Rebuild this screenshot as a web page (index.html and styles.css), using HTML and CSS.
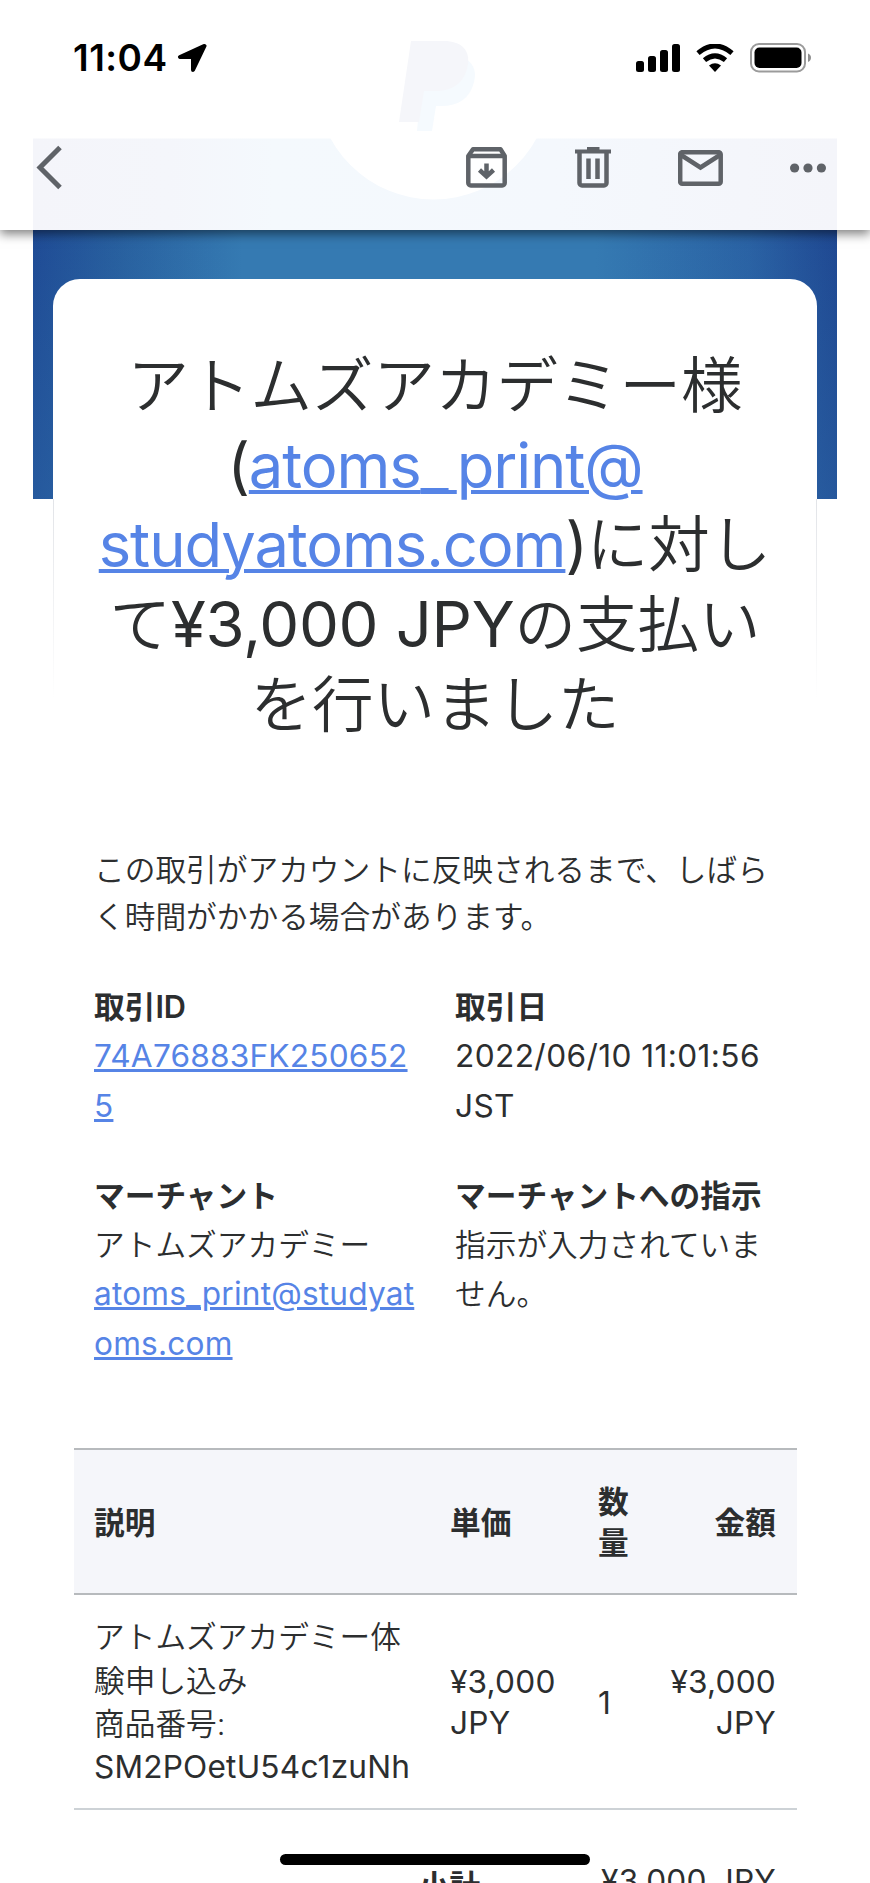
FILE: index.html
```html
<!DOCTYPE html>
<html lang="ja">
<head>
    <meta charset="UTF-8">
    <meta name="viewport" content="width=device-width, initial-scale=1.0">
    <title>支払いを行いました</title>
    <link rel="stylesheet" href="styles.css">
</head>
<body>
<div class="screen">
    <header class="topbar">
        <svg class="ghost" width="870" height="230" viewBox="0 0 870 230">
            <defs>
                <linearGradient id="pale" x1="0" x2="1" y1="0" y2="0">
                    <stop offset="0" stop-color="#f4f5fa"/>
                    <stop offset="0.17" stop-color="#f4f6fb"/>
                    <stop offset="0.3" stop-color="#f4f9fd"/>
                    <stop offset="0.65" stop-color="#f4f8fd"/>
                    <stop offset="1" stop-color="#f4f5fa"/>
                </linearGradient>
            </defs>
            <rect x="33" y="138.5" width="804" height="92" fill="url(#pale)"/>
            <circle cx="433.500" cy="82" r="117.5" fill="#fff"/>
            <path d="M424 57h38c11 5 15 13 12 25-4 16-15 24-33 24h-5l-4 25h-15z" fill="#f5fafe"/>
            <path d="M411 41h33c17 0 26 9 24 23-3 18-14 27-32 27h-12l-5 31h-20z" fill="#f5f6fa"/>
        </svg>
        <div class="status">
            <span class="time">11:04</span>
            <svg class="arrow" width="30" height="30" viewBox="0 0 30 30"><path d="M27 3L3 14H16V27L27.500 3z" fill="#000" stroke="#000" stroke-width="4" stroke-linejoin="round"/></svg>
            <div class="status-icons">
                <svg width="44" height="28" viewBox="0 0 44 28">
                    <rect x="0" y="17" width="8" height="11" rx="2.500"/>
                    <rect x="12" y="12" width="8" height="16" rx="2.500"/>
                    <rect x="24" y="6" width="8" height="22" rx="2.500"/>
                    <rect x="36" y="0" width="8" height="28" rx="2.500"/>
                </svg>
                <svg width="38" height="28" viewBox="0 0 38 28">
                    <path d="M2 9.200Q19 -5.200 36 9.200" fill="none" stroke="#000" stroke-width="5"/>
                    <path d="M8.500 16.200Q19 7.400 29.500 16.200" fill="none" stroke="#000" stroke-width="5"/>
                    <path d="M13 21.500Q19 17 25 21.500L19 28z"/>
                </svg>
                <svg width="62" height="30" viewBox="0 0 62 30">
                    <rect x="1" y="1" width="54" height="27.500" rx="8" fill="none" stroke="#9b9b9b" stroke-width="2"/>
                    <rect x="4.500" y="4.500" width="47" height="20.500" rx="5"/>
                    <path d="M58 10.500q3 1.300 3 4.200t-3 4.200z" fill="#8e8e8e"/>
                </svg>
            </div>
        </div>
        <nav class="toolbar">
            <svg width="28" height="46" viewBox="0 0 28 46"><path d="M25 2.500L5 22.500L25 42.500" fill="none" stroke="#5f6368" stroke-width="5"/></svg>
            <div class="actions">
                <svg width="42" height="42" viewBox="0 0 42 42" fill="none" stroke="#5f6368" stroke-width="4.500">
                    <path d="M2.300 9L7 2.300H34.500L38.700 9V36a2.500 2.500 0 0 1-2.500 2.500H4.800A2.500 2.500 0 0 1 2.300 36z" stroke-linejoin="round"/>
                    <path d="M2.300 9H38.700M20.500 16.500V29M13.500 23L20.500 29.500L27.500 23"/>
                </svg>
                <svg width="36" height="42" viewBox="0 0 36 42" fill="none" stroke="#5f6368">
                    <path d="M0 4.500H36M12 1.800H24.500" stroke-width="4"/>
                    <path d="M4.500 6V36a2.500 2.500 0 0 0 2.500 2.500H29a2.500 2.500 0 0 0 2.500-2.500V6" stroke-width="4.500"/>
                    <path d="M13.500 11.500V32M22.500 11.500V32" stroke-width="4.500"/>
                </svg>
                <svg width="45" height="36" viewBox="0 0 45 36" fill="none" stroke="#5f6368" stroke-width="4.500">
                    <rect x="2.200" y="2.200" width="40.500" height="31.500" rx="2"/>
                    <path d="M3 5L22.500 17.500L42 5"/>
                </svg>
                <svg width="36" height="10" viewBox="0 0 36 10" fill="#5f6368"><circle cx="4.600" cy="5" r="4.600"/><circle cx="18" cy="5" r="4.600"/><circle cx="31.400" cy="5" r="4.600"/></svg>
            </div>
        </nav>
    </header>

    <main class="mail">
        <div class="hero">
            <div class="card">
                <h1 class="title">アトムズアカデミー様<br><span class="mail-to">(<a href="#">atoms<span class="wide">_</span>print@</a></span><br><span class="mail-to"><a href="#">studyatoms.com</a>)</span>に対し<br>て<span class="en price">¥3,000 JPY</span>の支払い<br>を行いました</h1>
            </div>
        </div>

        <p class="note">この取引がアカウントに反映されるまで、しばら<br>く時間がかかる場合があります。</p>

        <div class="details">
            <div class="detail">
                <b>取引ID</b><br>
                <a class="en" href="#">74A76883FK250652<br>5</a>
            </div>
            <div class="detail">
                <b>取引日</b><br>
                <span class="en date">2022/06/10 11:01:56<br>JST</span>
            </div>
            <div class="detail">
                <b>マーチャント</b><br>
                アトムズアカデミー<br>
                <a class="en" href="#">atoms_print@studyat<br>oms.com</a>
            </div>
            <div class="detail">
                <b>マーチャントへの指示</b><br>
                指示が入力されていま<br>せん。
            </div>
        </div>

        <div class="items">
            <div class="row head">
                <div>説明</div>
                <div>単価</div>
                <div>数<br>量</div>
                <div class="right">金額</div>
            </div>
            <div class="row item">
                <div class="desc">アトムズアカデミー体<br>験申し込み<br>商品番号:<br><span class="en">SM2POetU54c1zuNh</span></div>
                <div class="en">¥3,000<br>JPY</div>
                <div class="en">1</div>
                <div class="right en">¥3,000<br>JPY</div>
            </div>
            <div class="total">
                <b>小計</b>
                <span class="en">¥3,000 JPY</span>
            </div>
        </div>
    </main>
    <div class="home-bar"></div>
</div>
</body>
</html>
```

FILE: styles.css
```css
body {
    margin: 0;
    background-color: #fff;
    color: #2c2e2f;
    font-family: Inter, "Noto Sans CJK JP", sans-serif;
    font-size: 30.7px;
    font-weight: 350;
}

a {
    color: #5684e6;
    text-decoration: underline;
}

svg {
    display: block;
    flex: none;
}

.en {
    font-size: 1.030em;
    font-weight: 380;
    letter-spacing: 0.2px;
}

.date {
    letter-spacing: 0.4px;
}

.screen {
    position: relative;
    width: 870px;
    height: 1883px;
    overflow: hidden;
}

/* status bar and mail toolbar */
.topbar {
    position: relative;
    z-index: 2;
    height: 230px;
    background-color: #fff;
    box-shadow: 0 4px 10px rgba(0, 0, 0, 0.5);
}

.ghost {
    position: absolute;
    top: 0;
    left: 0;
}

.status {
    position: relative;
    display: flex;
    align-items: center;
    height: 72px;
    padding: 22px 58px 0 73px;
}

.time {
    color: #000;
    font-size: 37px;
    font-weight: 600;
    line-height: 44px;
    letter-spacing: 0.5px;
}

.arrow {
    margin-left: 9px;
}

.status-icons {
    display: flex;
    align-items: center;
    gap: 16px;
    margin-left: auto;
}

.toolbar {
    position: relative;
    display: flex;
    align-items: center;
    justify-content: space-between;
    height: 46px;
    padding: 51px 44px 0 35px;
}

.actions {
    display: flex;
    align-items: center;
    gap: 67px;
}

/* blue banner with the white card on it */
.hero {
    height: 269px;
    margin: 0 33px;
    padding: 49px 20px 0;
    background-image: linear-gradient(to bottom, rgba(53, 122, 178, 0), rgba(53, 122, 178, 0.3)),
        linear-gradient(to right, #1f4b95 0%, #28609f 11%, #357ab2 26%, #357ab2 70%, #2a62a4 89%, #1f4892 100%);
    box-sizing: border-box;
}

.card {
    height: 440px;
    padding-top: 67px;
    background:
        linear-gradient(to bottom, #e2e4e8, #fff) 0 220px / 1px 200px no-repeat,
        linear-gradient(to bottom, #e2e4e8, #fff) 100% 220px / 1px 200px no-repeat,
        #fff;
    border-radius: 27px 27px 0 0;
    box-sizing: border-box;
}

.title {
    margin: 0;
    font-size: 61.5px;
    font-weight: 350;
    line-height: 79.700px;
    text-align: center;
    white-space: nowrap;
}

.title a {
    text-decoration-thickness: 4px;
}

.mail-to {
    font-weight: 380;
    letter-spacing: -1.100px;
}

.wide {
    letter-spacing: 8px;
}

.price {
    letter-spacing: -0.300px;
}

.note {
    margin: 347px 94px 0;
    line-height: 47px;
    white-space: nowrap;
}

.details {
    display: grid;
    grid-template-columns: 361px 361px;
    row-gap: 41px;
    margin: 42px 0 0 94px;
    line-height: 49.300px;
    white-space: nowrap;
}

.detail b,
.total b {
    font-weight: 600;
}

/* purchased items */
.items {
    margin: 80px 73px 0 74px;
}

.row {
    display: grid;
    grid-template-columns: 356px 148px 59px 1fr;
    align-items: center;
    padding: 1px 21px 0 20px;
    border-bottom: 2px solid #b7babd;
    line-height: 41px;
    box-sizing: border-box;
}

.head {
    height: 147px;
    border-top: 2px solid #b7babd;
    background-color: #f5f6fa;
    font-weight: 600;
}

.item {
    height: 215px;
    border-bottom-color: #cdd2d6;
}

.desc {
    line-height: 43.300px;
}

.right {
    text-align: right;
}

.total {
    display: flex;
    justify-content: flex-end;
    gap: 121px;
    padding: 51px 21px 0;
    white-space: nowrap;
}

.home-bar {
    position: absolute;
    z-index: 3;
    left: 280px;
    bottom: 18px;
    width: 310px;
    height: 11px;
    border-radius: 6px;
    background-color: #000;
}
```
